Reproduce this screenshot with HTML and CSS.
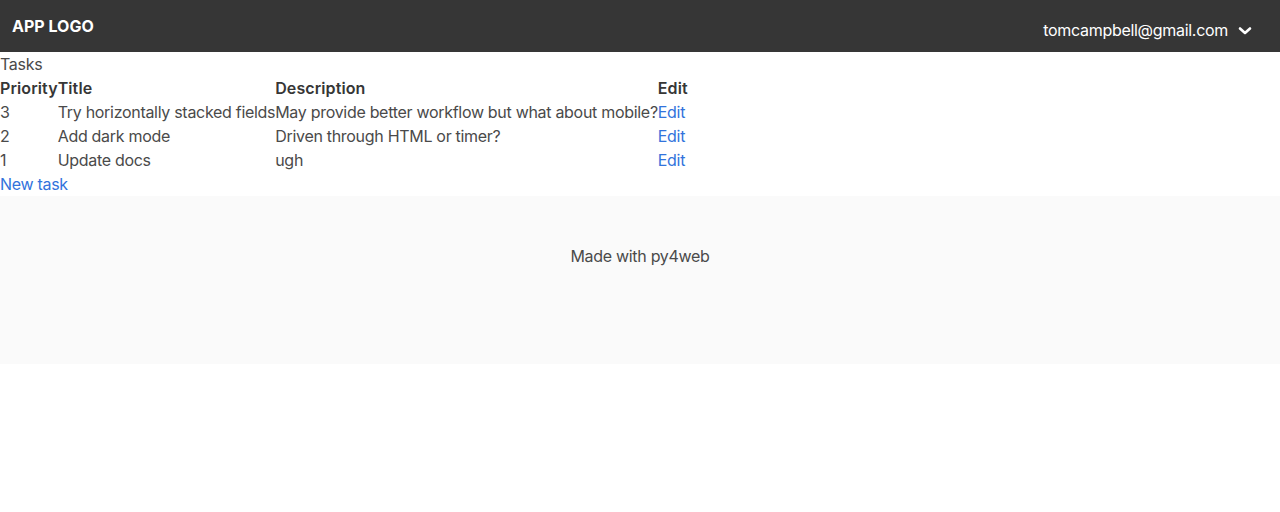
FILE: index.html
```html
<!DOCTYPE html>
<html>
<head>
<meta charset="utf-8">
<link rel="stylesheet" href="styles.css">
</head>
<body>
<nav class="navbar">
  <div class="brand">APP LOGO</div>
  <div class="user">
    <span>tomcampbell@gmail.com</span>
    <svg class="chev" width="14" height="10" viewBox="0 0 14 10"><path d="M2 2.5 L7 7 L12 2.5" fill="none" stroke="#fff" stroke-width="2.6" stroke-linecap="round" stroke-linejoin="round"/></svg>
  </div>
</nav>
<main class="main">
  <div class="title">Tasks</div>
  <table class="tasks">
    <thead>
      <tr><th>Priority</th><th>Title</th><th>Description</th><th>Edit</th></tr>
    </thead>
    <tbody>
      <tr><td>3</td><td>Try horizontally stacked fields</td><td>May provide better workflow but what about mobile?</td><td><a href="#">Edit</a></td></tr>
      <tr><td>2</td><td>Add dark mode</td><td>Driven through HTML or timer?</td><td><a href="#">Edit</a></td></tr>
      <tr><td>1</td><td>Update docs</td><td>ugh</td><td><a href="#">Edit</a></td></tr>
    </tbody>
  </table>
  <a href="#" class="new">New task</a>
</main>
<footer class="footer">Made with py4web</footer>
</body>
</html>
```
FILE: styles.css
```css
html, body { margin: 0; padding: 0; }
body {
  font-family: Inter, "Noto Sans", sans-serif;
  font-size: 16px;
  line-height: 24px;
  color: #4a4a4a;
  background: #fff;
  letter-spacing: -0.3px;
}
.navbar {
  height: 52px;
  background: #363636;
  display: flex;
  align-items: center;
  justify-content: space-between;
  padding: 0 12px;
  color: #fff;
}
.brand { font-weight: 700; font-size: 16px; letter-spacing: 0; }
.user { display: flex; align-items: center; gap: 10px; padding-right: 16px; font-size: 16px; margin-top: 8px; }
.chev { display: block; margin-top: 2px; }
.title { color: #4a4a4a; }
.tasks { border-collapse: collapse; border-spacing: 0; }
.tasks th, .tasks td { padding: 0; text-align: left; vertical-align: top; white-space: nowrap; }
.tasks th { color: #363636; font-weight: 600; letter-spacing: 0.1px; }
a { color: #3273dc; text-decoration: none; }
.new { display: block; width: max-content; }
.footer {
  background: #fafafa;
  padding: 48px 24px 96px;
  text-align: center;
}
```
